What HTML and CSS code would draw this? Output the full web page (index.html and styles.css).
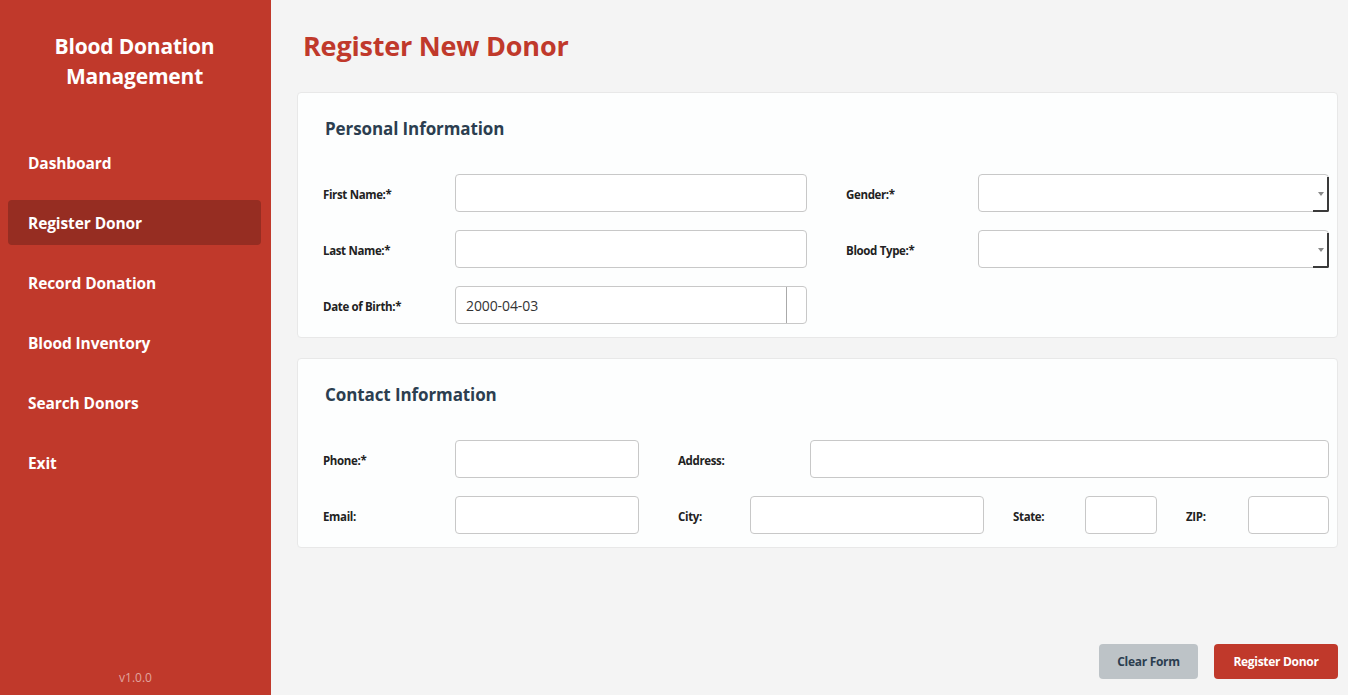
FILE: index.html
```html
<!DOCTYPE html>
<html>
<head>
<meta charset="utf-8">
<link rel="stylesheet" href="styles.css">
</head>
<body>
<div class="app">
  <aside class="sidebar">
    <div class="brand">Blood Donation<br>Management</div>
    <nav class="nav">
      <div class="nav-item">Dashboard</div>
      <div class="nav-item active">Register Donor</div>
      <div class="nav-item">Record Donation</div>
      <div class="nav-item">Blood Inventory</div>
      <div class="nav-item">Search Donors</div>
      <div class="nav-item">Exit</div>
    </nav>
    <div class="version">v1.0.0</div>
  </aside>
  <main class="main">
    <h1 class="page-title">Register New Donor</h1>

    <section class="card">
      <h2 class="card-title">Personal Information</h2>
      <div class="grid-personal">
        <label class="lbl">First Name:*</label>
        <div class="field"></div>
        <label class="lbl lbl-gap">Gender:*</label>
        <div class="field select"><span class="arrow"></span></div>

        <label class="lbl">Last Name:*</label>
        <div class="field"></div>
        <label class="lbl lbl-gap">Blood Type:*</label>
        <div class="field select"><span class="arrow"></span></div>

        <label class="lbl">Date of Birth:*</label>
        <div class="field date"><span class="date-text">2000-04-03</span><span class="date-btn"></span></div>
      </div>
    </section>

    <section class="card">
      <h2 class="card-title">Contact Information</h2>
      <div class="rows">
        <div class="row">
          <label class="lbl w132">Phone:*</label>
          <div class="field w184"></div>
          <label class="lbl w132 ml39">Address:</label>
          <div class="field grow"></div>
        </div>
        <div class="row">
          <label class="lbl w132">Email:</label>
          <div class="field w184"></div>
          <label class="lbl w72 ml39">City:</label>
          <div class="field w234"></div>
          <label class="lbl w72 ml29">State:</label>
          <div class="field w72"></div>
          <label class="lbl w62 ml29">ZIP:</label>
          <div class="field grow"></div>
        </div>
      </div>
    </section>

    <div class="actions">
      <button class="btn btn-secondary">Clear Form</button>
      <button class="btn btn-primary">Register Donor</button>
    </div>
  </main>
</div>
</body>
</html>
```

FILE: styles.css
```css
* { box-sizing: border-box; }
html, body { margin: 0; padding: 0; height: 100%; }
body {
  font-family: "Open Sans", "Noto Sans", sans-serif;
  color: #333;
  background: #f4f4f4;
}
.app {
  display: flex;
  width: 1348px;
  height: 695px;
}
.sidebar {
  width: 271px;
  flex: none;
  background: #c0392b;
  color: #fff;
  display: flex;
  flex-direction: column;
  padding: 0 10px 0 8px;
}
.brand {
  text-align: center;
  font-weight: 700;
  font-size: 21px;
  line-height: 30px;
  margin-top: 31px;
  letter-spacing: -0.2px;
}
.nav {
  margin-top: 49px;
  display: flex;
  flex-direction: column;
  gap: 15px;
}
.nav-item {
  height: 45px;
  line-height: 45px;
  padding-top: 1px;
  padding-left: 20px;
  font-size: 15.5px;
  font-weight: 700;
  border-radius: 4px;
  letter-spacing: -0.1px;
}
.nav-item.active { background: #962d22; }
.version {
  margin-top: auto;
  margin-bottom: 9px;
  text-align: center;
  font-size: 12px;
  color: rgba(255,255,255,0.55);
  padding-left: 2px;
}
.main {
  flex: 1;
  display: flex;
  flex-direction: column;
  padding: 0 10px 16px 26px;
}
.page-title {
  margin: 28px 0 0 6px;
  font-size: 27px;
  line-height: 36px;
  font-weight: 700;
  color: #c0392b;
  letter-spacing: -0.2px;
}
.card {
  background: #fdfefe;
  border: 1px solid #e8e8e8;
  border-radius: 4px;
  padding: 23px 8px 13px 25px;
  margin-top: 20px;
}
.card:first-of-type { margin-top: 28px; }
.card-title {
  margin: 0 0 0 2px;
  font-size: 17px;
  line-height: 26px;
  font-weight: 700;
  color: #2c3e50;
  letter-spacing: -0.1px;
}
.grid-personal {
  margin-top: 32px;
  display: grid;
  grid-template-columns: 132px 352px 171px 1fr;
  grid-auto-rows: 38px;
  row-gap: 18px;
}
.lbl {
  font-size: 11.5px;
  font-weight: 700;
  color: #222;
  display: flex;
  align-items: center;
  padding-top: 2px;
  letter-spacing: -0.35px;
  flex: none;
}
.lbl-gap { padding-left: 39px; }
.field {
  height: 38px;
  background: #fff;
  border: 1px solid #c8c8c8;
  border-radius: 4px;
  position: relative;
  flex: none;
}
.arrow {
  position: absolute;
  right: -1px;
  top: 2px;
  bottom: -1px;
  width: 16px;
  border-right: 2px solid #3a3a3a;
  border-bottom: 2px solid #3a3a3a;
  border-bottom-right-radius: 2px;
}
.arrow::after {
  content: "";
  position: absolute;
  right: 3px;
  top: 15px;
  border-left: 3.5px solid transparent;
  border-right: 3.5px solid transparent;
  border-top: 4px solid #8a8a8a;
}
.date {
  display: flex;
  align-items: center;
}
.date-text {
  flex: 1;
  padding-left: 10px;
  padding-top: 1px;
  font-size: 14px;
  color: #333;
  letter-spacing: -0.1px;
}
.date-btn {
  width: 20px;
  height: 100%;
  border-left: 1px solid #aaa;
}
.rows {
  margin-top: 32px;
  display: flex;
  flex-direction: column;
  gap: 18px;
}
.row {
  display: flex;
  height: 38px;
}
.w132 { width: 132px; }
.w184 { width: 184px; }
.w72 { width: 72px; }
.w62 { width: 62px; }
.w234 { width: 234px; }
.ml39 { margin-left: 39px; }
.ml29 { margin-left: 29px; }
.grow { flex: 1; }
.actions {
  margin-top: auto;
  display: flex;
  justify-content: flex-end;
  gap: 16px;
}
.btn {
  height: 35px;
  border: none;
  border-radius: 4px;
  font-family: inherit;
  font-size: 12px;
  font-weight: 700;
  padding: 0;
  letter-spacing: -0.3px;
}
.btn-secondary { background: #bdc3c7; color: #2c3e50; width: 99px; }
.btn-primary { background: #c0392b; color: #fff; width: 124px; }
```
